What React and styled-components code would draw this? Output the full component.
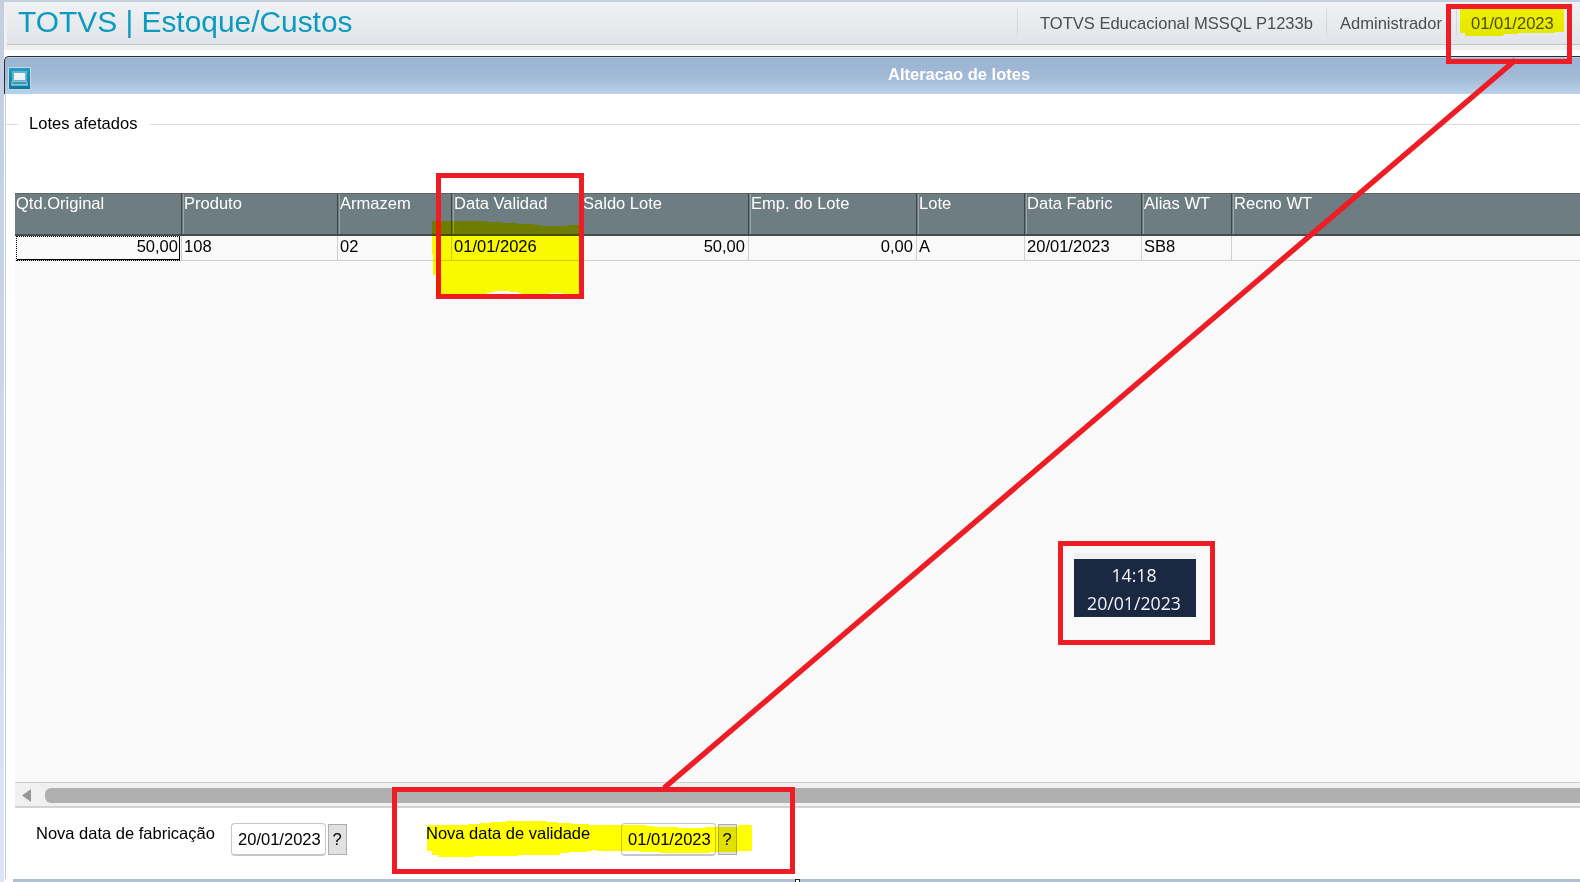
import React from 'react';
import styled, { createGlobalStyle } from 'styled-components'

const GlobalStyle = createGlobalStyle`
    *{
      box-sizing:border-box;
    }
    body{
      margin:0px;
      overflow:hidden;
      background:#fff;
      font-family:"Liberation Sans", Arial, sans-serif;
      font-size:16.55px;
      line-height:20px;
      color:#000;
    }
`

const Screen = styled.div`
    position:relative;
    width:1580px;
    height:882px;
    display:flex;
    overflow:hidden;
    white-space:nowrap;
`

const LeftStrip = styled.div`
    width:4px;
    flex-shrink:0;
    background:linear-gradient(#c5cee1 0%, #c7d1e4 25%, #dce6f3 100%);
`

const Main = styled.div`
    flex:1;
    min-width:0;
    display:flex;
    flex-direction:column;
`

const AppHeader = styled.header`
    height:50px;
    flex-shrink:0;
    border-top:2px solid #c5cfe0;
    background:#f0f0f0;
    padding:0px 0px 5px 3px;
    .bar{
      height:43px;
      display:flex;
      justify-content:space-between;
      background:linear-gradient(#eff1f4, #e9ecee 45%, #e1e5ea);
      border-bottom:1px solid #bfc6ca;
    }
    h1{
      margin:3px 0px 0px 11px;
      font-weight:400;
      font-size:29.9px;
      line-height:34px;
      color:#0c9abe;
    }
`

const HeaderInfo = styled.div`
    display:flex;
    margin-top:7px;
    height:27px;
`

const InfoItem = styled.span`
    width:${props => props.width}px;
    padding:5px 0px 0px ${props => props.indent}px;
    border-left:1px solid #d4d8da;
    color:#4d4d4d;
`

const TitleBar = styled.div`
    height:38px;
    margin-top:6px;
    flex-shrink:0;
    display:flex;
    position:relative;
    border-top:1px solid #2c2c30;
    border-left:1px solid #2c2c30;
    border-top-left-radius:5px;
    background:linear-gradient(#dfe6ef 0px, #9ab4d3 1px, #a2bad6 55%, #b9d1ea 100%);
    svg{
      margin:10px 0px 0px 3px;
    }
    h2{
      margin:7px 0px 0px 857px;
      font-size:16.5px;
      line-height:20px;
      color:#fff;
    }
`

const Body = styled.div`
    flex:1;
    min-height:0;
    margin-left:1px;
    border-left:1px solid #bdcfe6;
    display:flex;
    flex-direction:column;
`

const GroupTitle = styled.div`
    height:20px;
    margin-top:20px;
    flex-shrink:0;
    display:flex;
    align-items:center;
    &:before, &:after{
      content:'';
      height:1px;
      background:#dcdcdc;
    }
    &:before{
      width:12px;
    }
    &:after{
      flex:1;
    }
    span{
      width:132px;
      padding-left:11px;
    }
`

const Grid = styled.div`
    height:590px;
    margin:59px 0px 0px 9px;
    flex-shrink:0;
    background:#f9f9f9;
    border-bottom:1px solid #c9cccc;
`

const GridRow = styled.div`
    display:grid;
    grid-template-columns:167px 156px 114px 129px 168px 168px 108px 117px 90px 1fr;
    > div:last-child{
      border-right:none;
    }
`

const HeadCell = styled.div`
    height:43px;
    padding-left:${props => props.indent || 2}px;
    color:#fff;
    background:${props => props.first ? 'none' : 'linear-gradient(#98a4a6, #98a4a6) 1px 0px / 1px 100% no-repeat'}, #6e7d81;
    background-color:#6e7d81;
    border-top:1px solid #5b6568;
    border-bottom:2px solid #444c4f;
    border-right:1px solid #3d4548;
    line-height:20px;
`

const Cell = styled.div`
    position:relative;
    height:25px;
    padding:0px 3px 0px ${props => props.indent || 2}px;
    text-align:${props => props.align || 'left'};
    border-right:1px solid #cfcfcf;
    border-bottom:1px solid #cfcfcf;
    line-height:22px;
    ${props => props.focused && `
      &:after{
        content:'';
        position:absolute;
        top:0px;
        left:1px;
        right:1px;
        bottom:-1px;
        border:1px dotted #000;
        border-right-style:solid;
        box-shadow:inset 0px -1px 0px #000;
      }
    `}
`

const ScrollBar = styled.div`
    height:25px;
    margin-left:9px;
    flex-shrink:0;
    display:flex;
    background:#f0f0f0;
    border-bottom:2px solid #cfd3d3;
    padding-top:5px;
    svg{
      margin:1px 14px 0px 7px;
    }
    .thumb{
      flex:1;
      height:15px;
      border-radius:6px 0px 0px 6px;
      background:#b0b0b0;
    }
`

const Form = styled.div`
    flex:1;
    display:flex;
    padding:15px 0px 0px 30px;
    label{
      width:195px;
      font-size:16.5px;
    }
`

const DateInput = styled.div`
    width:95px;
    height:33px;
    padding:6px 0px 0px 6px;
    border:1px solid #c4c8c8;
    border-bottom-width:2px;
    border-radius:4px;
    background:#fff;
`

const HelpButton = styled.button`
    width:19px;
    height:31px;
    margin:1px 79px 0px 2px;
    padding:0px 1px 0px 0px;
    border:1px solid #adadad;
    background:#e1e1e1;
    font:inherit;
    color:#000;
`

const BottomEdge = styled.div`
    height:3px;
    margin-left:9px;
    flex-shrink:0;
    background:#b0bfd3;
`

const Clock = styled.div`
    position:absolute;
    left:1074px;
    top:553px;
    width:122px;
    height:64px;
    border-top:6px solid #f0f0f0;
    background:#1b2842;
    color:#f2f4f7;
    font-family:"Open Sans", "Noto Sans", sans-serif;
    font-size:17.7px;
    line-height:28px;
    text-align:center;
    padding:2px 2px 0px 0px;
`

const Marks = styled.svg`
    position:absolute;
    top:0px;
    left:0px;
    pointer-events:none;
    .box{
      fill:none;
      stroke:#ee1c25;
      stroke-width:5px;
    }
`

const Highlight = styled(Marks)`
    mix-blend-mode:multiply;
    fill:#ffff00;
`

const columns = [
  { title: 'Qtd.Original', value: '50,00', align: 'right', indent: 1 },
  { title: 'Produto', value: '108' },
  { title: 'Armazem', value: '02' },
  { title: 'Data Validad', value: '01/01/2026' },
  { title: 'Saldo Lote', value: '50,00', align: 'right' },
  { title: 'Emp. do Lote', value: '0,00', align: 'right' },
  { title: 'Lote', value: 'A' },
  { title: 'Data Fabric', value: '20/01/2023' },
  { title: 'Alias WT', value: 'SB8' },
  { title: 'Recno WT', value: '' },
]

const WindowIcon = ()=>(
    <svg width="23" height="23" viewBox="0 0 23 23">
        <defs>
          <linearGradient id="icon" x1="0" y1="0" x2="0" y2="1">
            <stop offset="0" stopColor="#229dc0"/>
            <stop offset="1" stopColor="#07799e"/>
          </linearGradient>
        </defs>
        <rect x="0" y="0" width="23" height="23" fill="#c7d6e4"/>
        <rect x="1" y="1" width="21" height="21" fill="url(#icon)"/>
        <path d="M4 4h15v9l1 6H3l1-6z" fill="#67b5cd"/>
        <path d="M4.500 14.500h14l1 3h-16z" fill="#3f93ae" stroke="#8cc5d6"/>
        <rect x="6" y="6" width="11" height="7" fill="#edf3f4"/>
    </svg>
)

const App = ()=>{

    return(
        <Screen>
            <GlobalStyle />
            <LeftStrip />
            <Main>
                <AppHeader>
                  <div className="bar">
                    <h1>TOTVS | Estoque/Custos</h1>
                    <HeaderInfo>
                      <InfoItem width={309} indent={22}>TOTVS Educacional MSSQL P1233b</InfoItem>
                      <InfoItem width={130} indent={13}>Administrador</InfoItem>
                      <InfoItem width={124} indent={14}>01/01/2023</InfoItem>
                    </HeaderInfo>
                  </div>
                </AppHeader>
                <TitleBar>
                  <WindowIcon />
                  <h2>Alteracao de lotes</h2>
                </TitleBar>
                <Body>
                  <GroupTitle><span>Lotes afetados</span></GroupTitle>
                  <Grid>
                    <GridRow>
                      {columns.map((col, i)=> (
                        <HeadCell key={col.title} first={i === 0 || i === 4 ? 1 : 0} indent={col.indent}>{col.title}</HeadCell>
                      ))}
                    </GridRow>
                    <GridRow>
                      {columns.map((col, i)=> (
                        <Cell key={col.title} align={col.align} indent={col.indent} focused={i === 0 ? 1 : 0}>{col.value}</Cell>
                      ))}
                    </GridRow>
                  </Grid>
                  <ScrollBar>
                    <svg width="9" height="13" viewBox="0 0 9 13"><path d="M9 0v13L0 6.500z" fill="#979797"/></svg>
                    <div className="thumb" />
                  </ScrollBar>
                  <Form>
                    <label>Nova data de fabricação</label>
                    <DateInput>20/01/2023</DateInput>
                    <HelpButton>?</HelpButton>
                    <label>Nova data de validade</label>
                    <DateInput>01/01/2023</DateInput>
                    <HelpButton>?</HelpButton>
                  </Form>
                </Body>
                <BottomEdge />
            </Main>
            <Clock>
              <div>14:18</div>
              <div>20/01/2023</div>
            </Clock>
            <Marks width="1580" height="882">
              <path d="M1515.500 60L664 788" stroke="#ee1c25" strokeWidth="5.4"/>
              <rect className="box" x="1448.500" y="6.500" width="121" height="55"/>
              <rect className="box" x="438.500" y="175.500" width="143" height="121"/>
              <rect className="box" x="1060.500" y="543.500" width="152" height="99"/>
              <rect className="box" x="394.500" y="789.500" width="398" height="82"/>
              <rect x="795.500" y="879.500" width="4" height="4" fill="#fff" stroke="#222"/>
            </Marks>
            <Highlight width="1580" height="882">
              <path d="M1460 9H1564V32H1555V33H1518V34H1504V35H1503V36H1465V33H1460z"/>
              <path d="M432 221H487V222H502V223H518V224H534V225H541V226H567V225H579V294H563V293H549V294H521V293H518V292H509V290H508V291H495V292H491V293H487V294H478V296H436V275H433V254H432z"/>
              <path d="M427 825H468V824H480V823H491V822H506V821H546V822H558V823H572V824H589V825H646V826H655V827H678V828H705V827H738V825H752V851H738V852H710V853H660V852H640V851H596V850H592V851H588V852H569V853H560V855H518V856H474V857H438V855H432V851H427z"/>
            </Highlight>
        </Screen>
    )
}

export default App;
